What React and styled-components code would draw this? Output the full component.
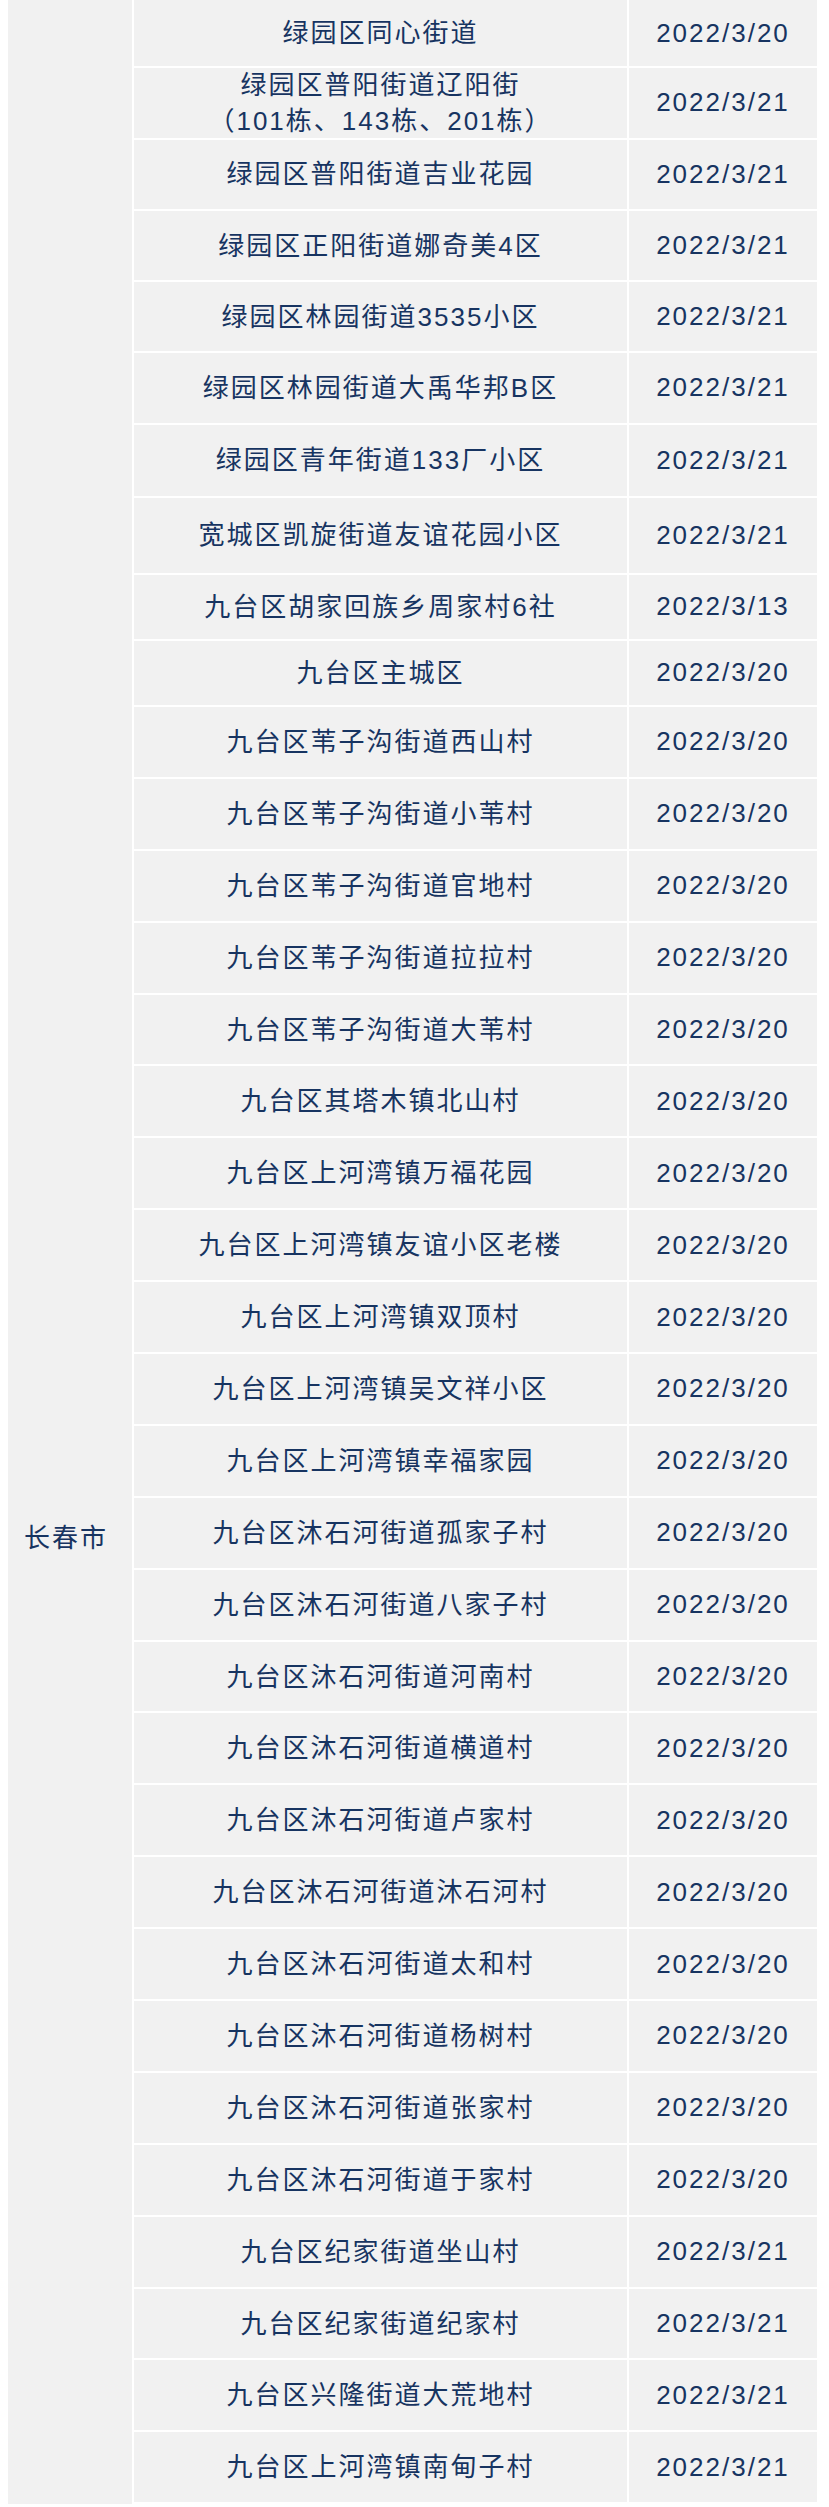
import React from 'react'
import styled, { createGlobalStyle } from 'styled-components'

const GlobalStyle = createGlobalStyle`
  html, body {
    margin: 0;
    padding: 0;
    background: #fff;
  }
  body {
    font-family: "Liberation Sans", "Noto Sans CJK SC", sans-serif;
  }
`

const places = [
  ['绿园区同心街道', '2022/3/20', 68],
  [['绿园区普阳街道辽阳街', '（101栋、143栋、201栋）'], '2022/3/21', 71.5],
  ['绿园区普阳街道吉业花园', '2022/3/21', 71.5],
  ['绿园区正阳街道娜奇美4区', '2022/3/21', 71],
  ['绿园区林园街道3535小区', '2022/3/21', 71],
  ['绿园区林园街道大禹华邦B区', '2022/3/21', 71.5],
  ['绿园区青年街道133厂小区', '2022/3/21', 73],
  ['宽城区凯旋街道友谊花园小区', '2022/3/21', 77],
  ['九台区胡家回族乡周家村6社', '2022/3/13', 66],
  ['九台区主城区', '2022/3/20', 66.5],
  ['九台区苇子沟街道西山村', '2022/3/20'],
  ['九台区苇子沟街道小苇村', '2022/3/20'],
  ['九台区苇子沟街道官地村', '2022/3/20'],
  ['九台区苇子沟街道拉拉村', '2022/3/20'],
  ['九台区苇子沟街道大苇村', '2022/3/20'],
  ['九台区其塔木镇北山村', '2022/3/20'],
  ['九台区上河湾镇万福花园', '2022/3/20'],
  ['九台区上河湾镇友谊小区老楼', '2022/3/20'],
  ['九台区上河湾镇双顶村', '2022/3/20'],
  ['九台区上河湾镇吴文祥小区', '2022/3/20'],
  ['九台区上河湾镇幸福家园', '2022/3/20'],
  ['九台区沐石河街道孤家子村', '2022/3/20'],
  ['九台区沐石河街道八家子村', '2022/3/20'],
  ['九台区沐石河街道河南村', '2022/3/20'],
  ['九台区沐石河街道横道村', '2022/3/20'],
  ['九台区沐石河街道卢家村', '2022/3/20'],
  ['九台区沐石河街道沐石河村', '2022/3/20'],
  ['九台区沐石河街道太和村', '2022/3/20'],
  ['九台区沐石河街道杨树村', '2022/3/20'],
  ['九台区沐石河街道张家村', '2022/3/20'],
  ['九台区沐石河街道于家村', '2022/3/20'],
  ['九台区纪家街道坐山村', '2022/3/21'],
  ['九台区纪家街道纪家村', '2022/3/21'],
  ['九台区兴隆街道大荒地村', '2022/3/21'],
  ['九台区上河湾镇南甸子村', '2022/3/21'],
]

function App() {
  return (
    <>
      <GlobalStyle />
      <Table>
        <CityCell>长春市</CityCell>
        <Rows>
          {places.map(([name, date, height], i) => (
            <Row key={i} $height={height || 71.9}>
              <PlaceCell>
                {Array.isArray(name)
                  ? name.map((line) => <Line key={line}>{line}</Line>)
                  : name}
              </PlaceCell>
              <DateCell>{date}</DateCell>
            </Row>
          ))}
        </Rows>
      </Table>
    </>
  )
}

const Table = styled.div`
  display: flex;
  width: 809px;
  margin-left: 8px;
  background: #f1f1f1;
  color: #173461;
  font-size: 26px;
  letter-spacing: 2px;
`

const CityCell = styled.div`
  box-sizing: border-box;
  width: 126px;
  flex-shrink: 0;
  display: flex;
  align-items: center;
  padding: 566px 0 0 16px;
  border-right: 2px solid #fff;
`

const Rows = styled.div`
  flex: 1;
  display: flex;
  flex-direction: column;
`

const Row = styled.div`
  box-sizing: border-box;
  display: flex;
  height: ${(p) => p.$height}px;
  border-bottom: 2px solid #fff;
`

const PlaceCell = styled.div`
  box-sizing: border-box;
  width: 495px;
  flex-shrink: 0;
  display: flex;
  flex-direction: column;
  align-items: center;
  justify-content: center;
  text-align: center;
  line-height: 36px;
  border-right: 2px solid #fff;
`

const Line = styled.span`
  display: block;
`

const DateCell = styled.div`
  flex: 1;
  display: flex;
  align-items: center;
  justify-content: center;
`

export default App
